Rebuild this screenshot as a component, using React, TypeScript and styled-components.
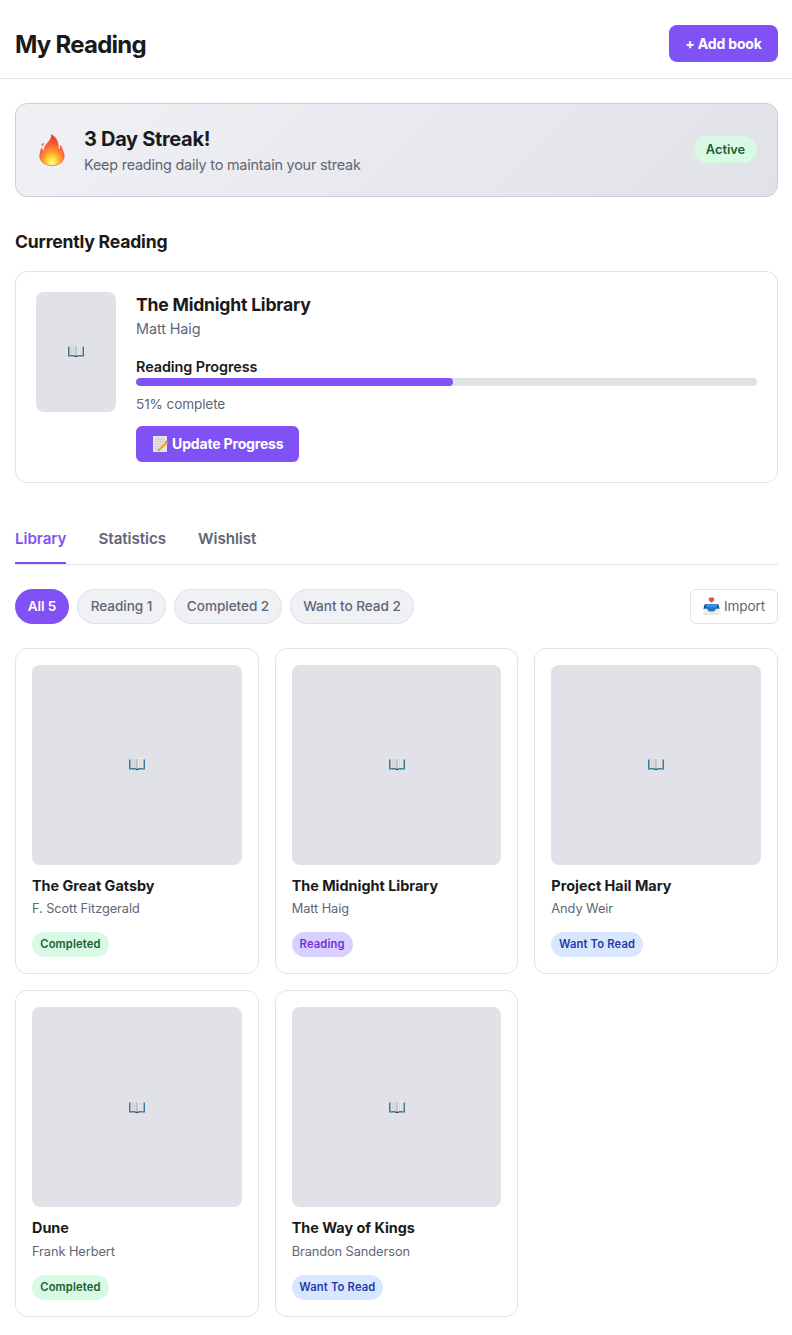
import React from "react";
import styled, { createGlobalStyle, css } from "styled-components";

const GlobalStyle = createGlobalStyle`
  * { box-sizing: border-box; }
  body { margin: 0; background: #fff; color: #1a1a1a; font-family: Inter, "Liberation Sans", sans-serif; }
  h1, h2, h3, p { margin: 0; }
  button { font-family: inherit; cursor: pointer; white-space: nowrap; }
`;

const Header = styled.header`
  display: flex;
  align-items: center;
  justify-content: space-between;
  height: 79px;
  padding: 9px 14px 0 15px;
  border-bottom: 1px solid #e5e5ec;
`;

const PageTitle = styled.h1`
  padding-top: 2px;
  font-size: 24px;
  line-height: 30px;
  font-weight: 700;
  letter-spacing: -0.75px;
`;

const PrimaryButton = styled.button<{ $width: number; $height: number; $radius: number }>`
  display: flex;
  align-items: center;
  justify-content: center;
  gap: 3.5px;
  width: ${(p) => p.$width}px;
  height: ${(p) => p.$height}px;
  padding: 0;
  border: 0;
  border-radius: ${(p) => p.$radius}px;
  background: #8052f6;
  color: #fff;
  font-size: 14px;
  line-height: 16px;
  font-weight: 700;
  letter-spacing: -0.17px;
`;

const Main = styled.main`
  padding: 24px 14px 18px 15px;
`;

const Streak = styled.section`
  display: flex;
  align-items: center;
  height: 94px;
  padding: 0 20px;
  border: 1px solid #c9cdd7;
  border-radius: 12px;
  background: linear-gradient(135deg, #f0f1f5 0%, #e1e2e8 100%);
`;

const StreakIcon = styled.div`
  display: flex;
  width: 32px;
  margin-right: 16px;
`;

const StreakText = styled.div`
  flex: 1;
  padding-top: 2px;
`;

const StreakTitle = styled.h2`
  font-size: 20px;
  line-height: 26px;
  font-weight: 700;
  letter-spacing: -0.32px;
`;

const StreakNote = styled.p`
  margin-top: 2px;
  font-size: 14.4px;
  line-height: 22px;
  color: #5f6675;
  letter-spacing: -0.21px;
`;

const ActiveBadge = styled.span`
  width: 63px;
  height: 27px;
  margin-bottom: 1px;
  border-radius: 14px;
  background: #d8fae4;
  color: #185c33;
  font-size: 12.8px;
  line-height: 27px;
  font-weight: 600;
  text-align: center;
`;

const SectionTitle = styled.h2`
  margin: 33px 0 17px;
  font-size: 17.6px;
  line-height: 24px;
  font-weight: 700;
  letter-spacing: -0.2px;
`;

const CurrentCard = styled.section`
  display: flex;
  gap: 20px;
  height: 212px;
  padding: 20px;
  border: 1px solid #e2e3e9;
  border-radius: 12px;
`;

const Cover = styled.div<{ $small?: boolean }>`
  display: flex;
  align-items: center;
  justify-content: center;
  flex-shrink: 0;
  padding-bottom: 1.6px;
  border-radius: 8px;
  background: #e1e2e8;
  ${(p) => (p.$small ? css`width: 80px; height: 120px;` : css`height: 200px; padding-left: 0.6px;`)}
`;

const CurrentInfo = styled.div`
  flex: 1;
`;

const CurrentTitle = styled.h3`
  font-size: 17.6px;
  line-height: 26px;
  font-weight: 700;
  letter-spacing: -0.22px;
`;

const CurrentAuthor = styled.p`
  font-size: 14.4px;
  line-height: 22px;
  color: #5f6675;
  letter-spacing: -0.1px;
`;

const ProgressLabel = styled.p`
  margin-top: 16px;
  font-size: 14.4px;
  line-height: 22px;
  font-weight: 600;
  letter-spacing: -0.07px;
`;

const Track = styled.div`
  height: 8px;
  border-radius: 4px;
  background: #e1e2e8;
  overflow: hidden;
`;

const Fill = styled.div`
  height: 100%;
  border-radius: 4px;
  background: #8052f6;
`;

const ProgressNote = styled.p`
  margin: 8px 0 12px;
  font-size: 13.6px;
  line-height: 20px;
  color: #5f6675;
  letter-spacing: -0.12px;
`;

const Tabs = styled.nav`
  display: flex;
  gap: 32px;
  height: 50px;
  margin-top: 32px;
  border-bottom: 1px solid #dfe0e8;
`;

const Tab = styled.button<{ $active?: boolean }>`
  height: 49px;
  padding: 0 0 1px;
  border: 0;
  border-bottom: 2px solid ${(p) => (p.$active ? "#8052f6" : "transparent")};
  background: none;
  color: ${(p) => (p.$active ? "#8052f6" : "#5f6675")};
  font-size: 15.2px;
  font-weight: 600;
  letter-spacing: -0.06px;
`;

const Toolbar = styled.div`
  display: flex;
  gap: 8px;
  margin: 24px 0;
`;

const Pill = styled.button<{ $active?: boolean; $width: number }>`
  width: ${(p) => p.$width}px;
  height: 35px;
  padding: 0 0 1px;
  border: 1px solid ${(p) => (p.$active ? "#8052f6" : "#dfe0e8")};
  border-radius: 18px;
  background: ${(p) => (p.$active ? "#8052f6" : "#f0f1f5")};
  color: ${(p) => (p.$active ? "#fff" : "#5f6675")};
  font-size: 13.6px;
  line-height: 16px;
  font-weight: ${(p) => (p.$active ? 600 : 500)};
  letter-spacing: -0.05px;
`;

const ImportButton = styled.button`
  display: flex;
  align-items: center;
  justify-content: center;
  gap: 4px;
  width: 88px;
  height: 35px;
  margin-left: auto;
  padding: 0 0 1px;
  border: 1px solid #e1e2e8;
  border-radius: 6px;
  background: #fff;
  color: #5f6675;
  font-size: 13.6px;
  line-height: 16px;
  letter-spacing: -0.15px;
`;

const Grid = styled.div`
  display: grid;
  grid-template-columns: repeat(3, 1fr);
  gap: 16px;
`;

const BookCard = styled.article`
  height: 326.4px;
  padding: 16px;
  border: 1px solid #e2e3e9;
  border-radius: 12px;
`;

const BookTitle = styled.h3`
  margin-top: 11px;
  font-size: 14.4px;
  line-height: 20px;
  font-weight: 700;
  letter-spacing: 0;
`;

const BookAuthor = styled.p`
  margin-top: 2.3px;
  font-size: 12.8px;
  line-height: 21px;
  color: #5f6675;
  letter-spacing: -0.08px;
`;

const tones = {
  Completed: css`width: 77px; background: #d8fae4; color: #185c33;`,
  Reading: css`width: 61px; background: #d8d0fe; color: #6f31dc;`,
  "Want To Read": css`width: 91.5px; background: #d9e7fe; color: #1f39aa;`,
};

type Status = keyof typeof tones;

const StatusBadge = styled.span<{ $status: Status }>`
  display: block;
  height: 25px;
  margin-top: 12.9px;
  border-radius: 12.5px;
  font-size: 11.2px;
  line-height: 25px;
  font-weight: 600;
  letter-spacing: 0.16px;
  text-align: center;
  ${(p) => tones[p.$status]}
`;

const FireIcon = () => (
  <svg width="32" height="36" viewBox="0 0 32 36">
    <defs>
      <radialGradient id="flame" cx="50%" cy="90%" r="82%">
        <stop offset="0" stopColor="#fff9a0" />
        <stop offset=".2" stopColor="#ffe03b" />
        <stop offset=".42" stopColor="#ffa12c" />
        <stop offset=".68" stopColor="#fb6530" />
        <stop offset="1" stopColor="#ed3b24" />
      </radialGradient>
    </defs>
    <path d="M15.500 2.500C20.800 5.500 23 11 22.300 18.300C24 17.500 24.700 15.500 24.400 13.200C26 15.200 26.300 18 27.500 20.500C30.300 27.500 24.300 33.600 16.300 33.600C8.200 33.600 2.800 28.500 3.800 22.500C4.100 20.300 5 18.500 5.400 16.300C6.500 17.500 7.300 19.200 8.200 21C7.800 17.500 8.400 14.500 10.700 12C14 8.500 15.600 6 15.500 2.500Z" fill="url(#flame)" stroke="#f04a26" strokeWidth=".6" />
    <path d="M7.900 10.800Q8 12.800 5.900 14.500Q4.700 12.300 7.900 10.800Z" fill="#f35532" />
  </svg>
);

const BookIcon = () => (
  <svg width="18" height="14" viewBox="0 0 18 14">
    <path d="M1 2.500H17V12.600H10.500Q9 13.700 7.500 12.600H1Z" fill="#397897" />
    <path d="M2.500 1.500C5 .7 7.500 .9 9 2.200V11.700C7 10.700 4.700 10.800 2.500 11.400Z" fill="#dedfe1" />
    <path d="M15.500 1.500C13 .7 10.500 .9 9 2.200V11.700C11 10.700 13.300 10.800 15.500 11.400Z" fill="#ececed" />
    <path d="M9 2.200V12" stroke="#8e9297" strokeWidth=".8" />
    <path d="M4.500 2V10.500M6.600 2V10.500M11.500 2V10.500M13.600 2V10.500" stroke="#c3c6ca" strokeWidth=".6" />
    <path d="M7.500 12H10.500V13H7.500Z" fill="#493f45" />
  </svg>
);

const MemoIcon = () => (
  <svg width="17" height="18" viewBox="0 0 17 18">
    <path d="M1 1H15V17H1Z" fill="#e5e4e1" />
    <path d="M3 4H12M3 6.500H12M3 9H9M3 11.500H7M3 14H6" stroke="#bcbdbf" strokeWidth=".8" strokeDasharray="2 .6" />
    <path d="M6.500 13.500L13.500 6.500L15.500 8.500L8.500 15L5.800 16Z" fill="#f3b52d" />
    <path d="M7.700 14.200L14.500 7.500" stroke="#cf8f20" strokeWidth=".7" />
    <path d="M13.500 6.500L14.700 5.300Q16.500 5.500 16.600 7.300L15.500 8.500Z" fill="#e7695f" />
    <path d="M5.800 16L6.500 14.600L7.500 15.400Z" fill="#564c42" />
  </svg>
);

const ImportIcon = () => (
  <svg width="17" height="18" viewBox="0 0 17 18">
    <path d="M.5 11H16.500V17.400H.5Z" fill="#eeeeea" />
    <path d="M.5 17.100H16.500" stroke="#c8c9c3" strokeWidth=".6" />
    <path d="M2 7H15L16.500 11.500H13.500L11 14.500H6L3.500 11.500H.5Z" fill="#2673ca" />
    <path d="M2 7L.5 11.500H3.200L2.700 7Z M15 7L16.500 11.500H13.800L14.300 7Z" fill="#1b4d7d" />
    <path d="M2.700 7H14.300L13.800 10H3.200Z" fill="#3c91e4" />
    <path d="M7 5H10V7H7Z" fill="#e6edf5" />
    <path d="M7 .5H10Q11.200 .5 11.200 2V3.500L8.500 5.500L5.800 3.500V2Q5.800 .5 7 .5Z" fill="#fa4643" />
  </svg>
);

const books: { title: string; author: string; status: Status }[] = [
  { title: "The Great Gatsby", author: "F. Scott Fitzgerald", status: "Completed" },
  { title: "The Midnight Library", author: "Matt Haig", status: "Reading" },
  { title: "Project Hail Mary", author: "Andy Weir", status: "Want To Read" },
  { title: "Dune", author: "Frank Herbert", status: "Completed" },
  { title: "The Way of Kings", author: "Brandon Sanderson", status: "Want To Read" },
];

export default function App() {
  const progress = 51;
  return (
    <>
      <GlobalStyle />
      <Header>
        <PageTitle>My Reading</PageTitle>
        <PrimaryButton $width={109} $height={37} $radius={8}>+ Add book</PrimaryButton>
      </Header>
      <Main>
        <Streak>
          <StreakIcon><FireIcon /></StreakIcon>
          <StreakText>
            <StreakTitle>3 Day Streak!</StreakTitle>
            <StreakNote>Keep reading daily to maintain your streak</StreakNote>
          </StreakText>
          <ActiveBadge>Active</ActiveBadge>
        </Streak>
        <SectionTitle>Currently Reading</SectionTitle>
        <CurrentCard>
          <Cover $small><BookIcon /></Cover>
          <CurrentInfo>
            <CurrentTitle>The Midnight Library</CurrentTitle>
            <CurrentAuthor>Matt Haig</CurrentAuthor>
            <ProgressLabel>Reading Progress</ProgressLabel>
            <Track><Fill style={{ width: `${progress}%` }} /></Track>
            <ProgressNote>{progress}% complete</ProgressNote>
            <PrimaryButton $width={163} $height={36} $radius={6}><MemoIcon />Update Progress</PrimaryButton>
          </CurrentInfo>
        </CurrentCard>
        <Tabs>
          <Tab $active>Library</Tab>
          <Tab>Statistics</Tab>
          <Tab>Wishlist</Tab>
        </Tabs>
        <Toolbar>
          <Pill $active $width={54}>All 5</Pill>
          <Pill $width={89}>Reading 1</Pill>
          <Pill $width={108}>Completed 2</Pill>
          <Pill $width={124}>Want to Read 2</Pill>
          <ImportButton><ImportIcon />Import</ImportButton>
        </Toolbar>
        <Grid>
          {books.map((b) => (
            <BookCard key={b.title}>
              <Cover><BookIcon /></Cover>
              <BookTitle>{b.title}</BookTitle>
              <BookAuthor>{b.author}</BookAuthor>
              <StatusBadge $status={b.status}>{b.status}</StatusBadge>
            </BookCard>
          ))}
        </Grid>
      </Main>
    </>
  );
}
